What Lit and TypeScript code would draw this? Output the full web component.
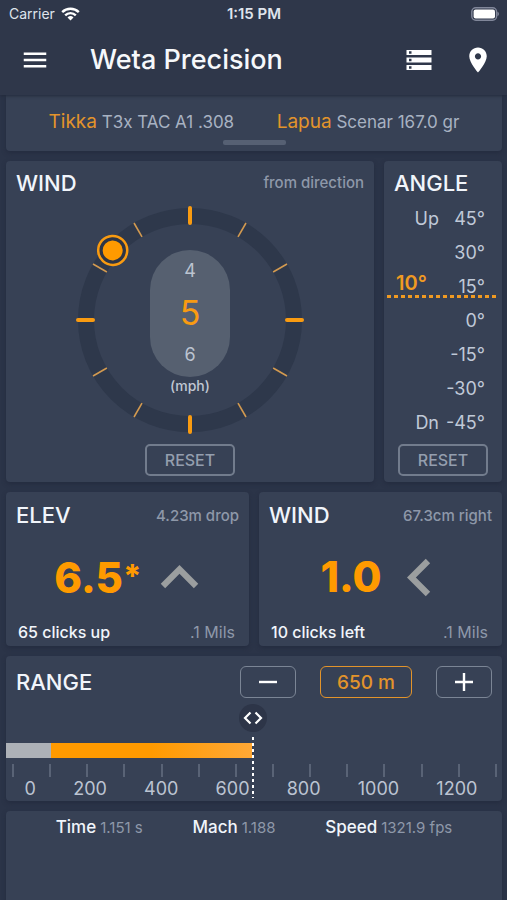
import { LitElement, html, svg, css } from "lit";
import { customElement, state } from "lit/decorators.js";
import { styleMap } from "lit/directives/style-map.js";

const RANGE_MIN = 116;
const RANGE_MAX = 1310;
const ROW = 34;

const icon = (path: string) => html`
  <svg viewBox="0 0 24 24" aria-hidden="true"><path d=${path} fill="currentColor" /></svg>
`;

const MENU = "M3 18h18v-2H3v2zm0-5h18v-2H3v2zm0-7v2h18V6H3z";
const STORAGE =
  "M2 20h20v-4H2v4zm2-3h2v2H4v-2zM2 4v4h20V4H2zm4 3H4V5h2v2zm-4 7h20v-4H2v4zm2-3h2v2H4v-2z";
const PLACE =
  "M12 2C8.13 2 5 5.13 5 9c0 5.25 7 13 7 13s7-7.75 7-13c0-3.87-3.13-7-7-7zm0 9.5c-1.38 0-2.5-1.12-2.5-2.5s1.12-2.5 2.5-2.5 2.5 1.12 2.5 2.5-1.12 2.5-2.5 2.5z";
const UP = "M12 8l-6 6 1.41 1.41L12 10.83l4.59 4.58L18 14z";
const LEFT = "M15.41 7.41L14 6l-6 6 6 6 1.41-1.41L10.83 12z";

/** Ring with clock ticks and a knob that marks where the wind comes from. */
@customElement("wind-dial")
class WindDial extends LitElement {
  static properties = { direction: { type: Number }, speed: { type: Number } };
  declare direction: number;
  declare speed: number;

  static styles = css`
    :host {
      display: grid;
      place-items: center;
    }
    svg,
    .center,
    .direction {
      grid-area: 1 / 1;
    }
    svg {
      width: 230px;
      height: 230px;
    }
    .ring {
      fill: none;
      stroke: #2e384b;
      stroke-width: 16;
    }
    .major {
      stroke: #f99b11;
      stroke-width: 4;
      stroke-linecap: round;
    }
    .minor {
      stroke: #d39a50;
      stroke-width: 1.6;
    }
    .knob {
      fill: #2d3546;
      stroke: #f99b11;
      stroke-width: 2.5;
    }
    .dot {
      fill: #ff9a00;
    }
    .center {
      padding-top: 4px;
      text-align: center;
    }
    .wheel {
      width: 80px;
      height: 127px;
      border-radius: 40px;
      background: #566070;
      display: flex;
      flex-direction: column;
      align-items: center;
      justify-content: center;
      font-size: 18px;
      line-height: 42px;
      color: #bcc4d0;
    }
    .speed {
      font-size: 34px;
      color: #f99b11;
    }
    .unit {
      font-size: 14px;
      line-height: 18px;
      font-weight: 500;
      color: #c0c7d3;
    }
    .direction {
      width: 230px;
      height: 230px;
      margin: 0;
      opacity: 0;
      z-index: 1;
    }
  `;

  render() {
    const hours = Array.from({ length: 12 }, (_, i) => i);
    return html`
      <svg viewBox="-115 -115 230 230" aria-hidden="true">
        <circle class="ring" r="104" />
        ${hours.map((h) =>
          h % 3 === 0
            ? svg`<line class="major" y1="-97" y2="-112" transform="rotate(${h * 30})" />`
            : svg`<line class="minor" y1="-96" y2="-112" transform="rotate(${h * 30})" />`
        )}
        <g transform="rotate(${this.direction})">
          <circle class="knob" cy="-104" r="14.5" />
          <circle class="dot" cy="-104" r="10" />
        </g>
      </svg>
      <div class="center">
        <div class="wheel">
          <span>${this.speed - 1}</span>
          <span class="speed">${this.speed}</span>
          <span>${this.speed + 1}</span>
        </div>
        <div class="unit">(mph)</div>
      </div>
      <input
        class="direction"
        type="range"
        min="0"
        max="359"
        aria-label="Wind direction"
        .value=${String(this.direction)}
        @input=${(e: Event) =>
          this.dispatchEvent(
            new CustomEvent("turn", { detail: Number((e.target as HTMLInputElement).value) })
          )}
      />
    `;
  }
}

@customElement("app-root")
class AppRoot extends LitElement {
  @state() private direction = 312;
  @state() private angle = 10;
  @state() private range = 650;

  static styles = css`
    :host {
      display: flex;
      flex-direction: column;
      min-height: 100vh;
      box-sizing: border-box;
      background: #2b3448;
      color: #f1f5fb;
      font-family: Inter, "Liberation Sans", sans-serif;
    }
    * {
      box-sizing: border-box;
    }
    button {
      font: inherit;
      color: inherit;
      background: none;
      border: 0;
      padding: 0;
      cursor: pointer;
    }
    h1,
    h2,
    p,
    dl,
    dd {
      margin: 0;
    }
    header {
      background: #2f374a;
      box-shadow: 0 1px 3px #232b3c;
      z-index: 1;
    }
    .status {
      display: grid;
      grid-template-columns: 1fr auto 1fr;
      align-items: center;
      height: 27px;
      padding: 0 8px 0 9px;
      font-size: 14px;
      color: #dfe4ec;
    }
    .carrier {
      display: flex;
      align-items: center;
      gap: 6px;
    }
    .wifi {
      width: 19px;
      height: 14px;
    }
    .clock {
      font-size: 15px;
      font-weight: 600;
    }
    .battery {
      width: 28px;
      height: 14px;
      justify-self: end;
    }
    .bar {
      display: flex;
      align-items: center;
      height: 66px;
      padding: 0 14px 0 20px;
      margin-bottom: 2px;
    }
    .bar button {
      width: 30px;
      height: 30px;
      color: #fff;
    }
    .bar svg {
      display: block;
    }
    h1 {
      flex: 1;
      margin-left: 40px;
      font-size: 27px;
      line-height: 32px;
      font-weight: 500;
      color: #f6f8fb;
    }
    .place {
      margin-left: 29px;
    }
    main {
      flex: 1;
      display: flex;
      flex-direction: column;
      gap: 10px;
      padding: 0 5px 0 6px;
    }
    .card {
      background: #374155;
      border-radius: 4px;
      box-shadow: 0 2px 4px #242c3f;
    }
    .rig {
      display: flex;
      flex-direction: column;
      align-items: center;
      height: 56px;
      padding-top: 12px;
      border-radius: 0 0 4px 4px;
    }
    .parts {
      width: 100%;
      display: flex;
      justify-content: space-evenly;
      font-size: 17px;
      line-height: 30px;
      color: #a8b2c2;
    }
    .maker {
      font-size: 19px;
      color: #e3942b;
    }
    .grip {
      width: 63px;
      height: 5px;
      margin-top: 3px;
      border-radius: 2px;
      background: #566073;
    }
    .top {
      display: grid;
      grid-template-columns: minmax(0, 1fr) 118px;
      gap: 10px;
    }
    .panel {
      display: flex;
      flex-direction: column;
      align-items: center;
      padding-bottom: 6px;
    }
    .head {
      align-self: stretch;
      display: flex;
      align-items: center;
      justify-content: space-between;
      height: 41px;
      padding: 2px 10px 0;
    }
    h2 {
      font-size: 22px;
      line-height: 26px;
      font-weight: 500;
    }
    .note {
      font-size: 15px;
      font-weight: 500;
      color: #8e98a9;
    }
    .dial {
      margin: 3px 0 9px;
    }
    .outline {
      width: 90px;
      height: 32px;
      border: 2px solid #727c8d;
      border-radius: 5px;
      font-size: 16px;
      font-weight: 500;
      color: #949eae;
    }
    .angles {
      position: relative;
      align-self: stretch;
      margin-bottom: 4px;
    }
    .scale {
      list-style: none;
      margin: 0;
      padding: 0 17px 0 0;
      font-size: 18px;
      line-height: 34px;
      color: #c0c9d8;
    }
    .scale li {
      display: grid;
      grid-template-columns: 1fr 46px;
      text-align: right;
    }
    .scale .deg {
      grid-column: 2;
    }
    .marker {
      position: absolute;
      left: 3px;
      right: 3px;
      padding: 0 0 5px 9px;
      font-size: 20px;
      line-height: 20px;
      font-weight: 600;
      color: #f09a22;
      background: linear-gradient(90deg, #f09a22 4px, transparent 4px) left bottom / 7px 3px
        repeat-x;
      transform: translateY(-100%);
    }
    .over {
      position: absolute;
      inset: 0;
      width: 100%;
      height: 100%;
      margin: 0;
      opacity: 0;
    }
    .vertical {
      writing-mode: vertical-lr;
      direction: rtl;
    }
    .pair {
      display: grid;
      grid-template-columns: 1fr 1fr;
      gap: 10px;
    }
    .solution {
      display: grid;
      grid-template-rows: 44px 1fr 28px;
      height: 154px;
    }
    .solution .head {
      height: 44px;
    }
    .result {
      display: flex;
      align-items: center;
      justify-content: center;
      padding-left: 16px;
      font-size: 42px;
      line-height: 50px;
      font-weight: 800;
      color: #ff9a00;
    }
    .approx {
      font-size: 32px;
      vertical-align: text-top;
    }
    .result svg {
      width: 75px;
      height: 75px;
      color: #9b9e9f;
    }
    .foot {
      display: flex;
      justify-content: space-between;
      padding: 0 14px 0 12px;
      font-size: 16px;
      line-height: 28px;
    }
    .clicks {
      font-weight: 500;
    }
    .foot .unit {
      color: #8e98a9;
    }
    .ranger .head {
      height: 50px;
    }
    .steps {
      display: flex;
      gap: 24px;
    }
    .steps button {
      width: 56px;
      height: 32px;
      display: grid;
      place-items: center;
      border: 1px solid #7b8595;
      border-radius: 6px;
    }
    .steps svg {
      width: 20px;
      height: 20px;
    }
    .steps .value {
      width: 92px;
      border-color: #e3942b;
      font-size: 19px;
      font-weight: 500;
      color: #e3942b;
    }
    .track {
      position: relative;
      padding: 37px 0 0;
    }
    .rail {
      position: relative;
      height: 15px;
      display: flex;
    }
    .near {
      width: 9%;
      background: #adb1b7;
    }
    .fill {
      background: linear-gradient(90deg, #ff9a00 50%, #ffa836);
    }
    .ticks {
      display: flex;
      justify-content: space-between;
      padding: 6px 5px 0 6px;
    }
    .ticks i {
      width: 2px;
      height: 13px;
      background: #596376;
    }
    .labels {
      display: flex;
      justify-content: space-around;
      padding: 0 6px 0 0;
      font-size: 18px;
      line-height: 24px;
      color: #bcc4d2;
    }
    .thumb {
      position: absolute;
      top: -2px;
      bottom: 3px;
      width: 28px;
      margin-left: -13px;
      display: flex;
      flex-direction: column;
      align-items: center;
    }
    .thumb svg {
      width: 28px;
      height: 28px;
      margin-bottom: 5px;
    }
    .thumb .line {
      flex: 1;
      width: 2px;
      background: repeating-linear-gradient(#fff 0 3px, #374155 3px 6px);
    }
    .stats {
      flex: 1;
      display: flex;
      justify-content: space-evenly;
      align-items: flex-start;
      min-height: 90px;
      padding-top: 4px;
      border-radius: 4px 4px 0 0;
      line-height: 24px;
    }
    .stats div {
      display: flex;
      align-items: baseline;
      gap: 4px;
    }
    .stats dt {
      font-size: 17px;
      font-weight: 500;
    }
    .stats dd {
      font-size: 15px;
      color: #8e98a9;
    }
  `;

  private step(by: number) {
    this.range = Math.min(RANGE_MAX, Math.max(0, this.range + by));
  }

  private solution(
    title: string,
    note: string,
    value: unknown,
    arrow: string,
    clicks: string
  ) {
    return html`
      <section class="card solution">
        <div class="head">
          <h2>${title}</h2>
          <span class="note">${note}</span>
        </div>
        <div class="result"><span>${value}</span>${icon(arrow)}</div>
        <div class="foot"><span class="clicks">${clicks}</span><span class="unit">.1 Mils</span></div>
      </section>
    `;
  }

  render() {
    const angles = [45, 30, 15, 0, -15, -30, -45];
    const markerTop = ROW / 2 + ((45 - this.angle) / 15) * ROW;
    const at = (this.range / RANGE_MAX) * 100;
    return html`
      <header>
        <div class="status">
          <span class="carrier">
            Carrier
            <svg class="wifi" viewBox="0 0 19 14" aria-hidden="true">
              <g fill="none" stroke="#fff" stroke-width="2.4">
                <path d="M1.2 5.2a11.8 11.8 0 0 1 16.6 0" />
                <path d="M4.2 8.3a7.5 7.5 0 0 1 10.6 0" />
              </g>
              <path d="M9.5 13.6l-3-3.1a4.3 4.3 0 0 1 6 0z" fill="#fff" />
            </svg>
          </span>
          <span class="clock">1:15 PM</span>
          <svg class="battery" viewBox="0 0 28 14" aria-hidden="true">
            <rect x=".8" y=".8" width="24.8" height="12.4" rx="4" fill="none" stroke="#81879a" stroke-width="1.4" />
            <rect x="2.6" y="2.4" width="21.4" height="9.2" rx="2" fill="#fff" />
            <path d="M26.4 4.8q1.6.6 1.6 2.2t-1.6 2.2z" fill="#81879a" />
          </svg>
        </div>
        <div class="bar">
          <button aria-label="Menu">${icon(MENU)}</button>
          <h1>Weta Precision</h1>
          <button aria-label="Profiles">${icon(STORAGE)}</button>
          <button class="place" aria-label="Location">${icon(PLACE)}</button>
        </div>
      </header>
      <main>
        <section class="card rig">
          <div class="parts">
            <span><span class="maker">Tikka</span> T3x TAC A1 .308</span>
            <span><span class="maker">Lapua</span> Scenar 167.0 gr</span>
          </div>
          <div class="grip"></div>
        </section>
        <div class="top">
          <section class="card panel">
            <div class="head">
              <h2>WIND</h2>
              <span class="note">from direction</span>
            </div>
            <wind-dial
              class="dial"
              .direction=${this.direction}
              .speed=${5}
              @turn=${(e: CustomEvent) => (this.direction = e.detail)}
            ></wind-dial>
            <button class="outline" @click=${() => (this.direction = 0)}>RESET</button>
          </section>
          <section class="card panel">
            <div class="head"><h2>ANGLE</h2></div>
            <div class="angles">
              <ul class="scale">
                ${angles.map(
                  (a) => html`<li>
                    ${a === 45 ? html`<span>Up</span>` : a === -45 ? html`<span>Dn</span>` : ""}
                    <span class="deg">${a}°</span>
                  </li>`
                )}
              </ul>
              <div class="marker" style=${styleMap({ top: `${Math.round(markerTop)}px` })}>
                ${this.angle}°
              </div>
              <input
                class="over vertical"
                type="range"
                min="-45"
                max="45"
                aria-label="Angle"
                .value=${String(this.angle)}
                @input=${(e: Event) => (this.angle = Number((e.target as HTMLInputElement).value))}
              />
            </div>
            <button class="outline" @click=${() => (this.angle = 0)}>RESET</button>
          </section>
        </div>
        <div class="pair">
          ${this.solution(
            "ELEV",
            "4.23m drop",
            html`6.5<span class="approx">*</span>`,
            UP,
            "65 clicks up"
          )}
          ${this.solution("WIND", "67.3cm right", "1.0", LEFT, "10 clicks left")}
        </div>
        <section class="card ranger">
          <div class="head">
            <h2>RANGE</h2>
            <div class="steps">
              <button aria-label="Decrease range" @click=${() => this.step(-10)}>
                <svg viewBox="0 0 20 20" aria-hidden="true">
                  <path d="M1 10h18" stroke="#fff" stroke-width="2.4" />
                </svg>
              </button>
              <button class="value">${this.range} m</button>
              <button aria-label="Increase range" @click=${() => this.step(10)}>
                <svg viewBox="0 0 20 20" aria-hidden="true">
                  <path d="M1 10h18M10 1v18" stroke="#fff" stroke-width="2.4" />
                </svg>
              </button>
            </div>
          </div>
          <div class="track">
            <div class="rail">
              <div class="near"></div>
              <div class="fill" style=${styleMap({ width: `${Math.max(0, at - 9)}%` })}></div>
            </div>
            <div class="ticks">${Array.from({ length: 14 }, () => html`<i></i>`)}</div>
            <div class="labels">
              ${[0, 200, 400, 600, 800, 1000, 1200].map((n) => html`<span>${n}</span>`)}
            </div>
            <div class="thumb" style=${styleMap({ left: `${at}%` })}>
              <svg viewBox="0 0 28 28" aria-hidden="true">
                <circle cx="14" cy="14" r="14" fill="#2d3548" />
                <path
                  d="M11.5 8.5L6 14l5.5 5.5M16.5 8.5L22 14l-5.5 5.5"
                  fill="none"
                  stroke="#fff"
                  stroke-width="2.2"
                />
              </svg>
              <span class="line"></span>
            </div>
            <input
              class="over"
              type="range"
              min=${RANGE_MIN}
              max=${RANGE_MAX}
              aria-label="Range"
              .value=${String(this.range)}
              @input=${(e: Event) => (this.range = Number((e.target as HTMLInputElement).value))}
            />
          </div>
        </section>
        <dl class="card stats">
          <div><dt>Time</dt><dd>1.151 s</dd></div>
          <div><dt>Mach</dt><dd>1.188</dd></div>
          <div><dt>Speed</dt><dd>1321.9 fps</dd></div>
        </dl>
      </main>
    `;
  }
}
